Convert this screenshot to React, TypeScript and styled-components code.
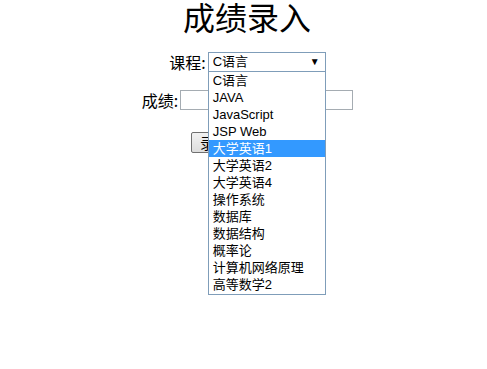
import React from "react";
import styled, { createGlobalStyle } from "styled-components";

const Global = createGlobalStyle`
  html, body { margin: 0; padding: 0; background: #fff; }
  body { font-family: "Liberation Sans", "Noto Sans CJK SC", sans-serif; color: #000; }
`;

const Page = styled.div`
  display: flex;
  flex-direction: column;
  align-items: center;
  padding-left: 7px;
  width: 487px;
  min-height: 369px;
  box-sizing: border-box;
`;

const Title = styled.h1`
  margin: 0;
  font-family: "Noto Sans CJK SC", serif;
  font-weight: 400;
  font-size: 32px;
  line-height: 32px;
  height: 34px;
`;

const Row = styled.div<{ $top: number }>`
  display: flex;
  align-items: center;
  justify-content: center;
  margin-top: ${(p) => p.$top}px;
  margin-left: 1px;
  height: 20px;
`;

const Label = styled.span`
  font-family: "Noto Sans CJK SC", sans-serif;
  font-size: 16px;
  line-height: 20px;
  padding-right: 2px;
`;

const SelectWrap = styled.div`
  position: relative;
  width: 118px;
  height: 20px;
`;

const SelectBox = styled.div`
  box-sizing: border-box;
  width: 118px;
  height: 20px;
  border: 1px solid #7f9db9;
  background: #fff;
  display: flex;
  align-items: center;
  justify-content: space-between;
  padding: 0 5px 0 4px;
  font-size: 13px;
  line-height: 18px;
`;

const Arrow = styled.span`
  font-size: 10px;
  line-height: 18px;
`;

const List = styled.ul`
  position: absolute;
  top: 19px;
  left: 0;
  margin: 0;
  padding: 0 0 1px;
  list-style: none;
  box-sizing: border-box;
  width: 118px;
  border: 1px solid #7f9db9;
  background: #fff;
  z-index: 2;
`;

const Item = styled.li<{ $active?: boolean }>`
  height: 17px;
  line-height: 17px;
  font-size: 13px;
  padding-left: 4px;
  white-space: nowrap;
  background: ${(p) => (p.$active ? "#3399ff" : "#fff")};
  color: ${(p) => (p.$active ? "#fff" : "#000")};
`;

const Input = styled.input`
  box-sizing: border-box;
  width: 173px;
  height: 20px;
  border: 1px solid #a5acb2;
  margin: 0;
  padding: 0 2px;
`;

const Buttons = styled.div`
  display: flex;
  gap: 16px;
  margin-top: 22px;
`;

const Button = styled.button`
  box-sizing: border-box;
  height: 21px;
  padding: 0 8px;
  font-family: "Noto Sans CJK SC", sans-serif;
  font-size: 15px;
  line-height: 19px;
  border: 1px solid #707070;
  border-radius: 2px;
  background: linear-gradient(#f2f2f2, #dddddd);
  color: #000;
`;

const courses = [
  "C语言",
  "JAVA",
  "JavaScript",
  "JSP Web",
  "大学英语1",
  "大学英语2",
  "大学英语4",
  "操作系统",
  "数据库",
  "数据结构",
  "概率论",
  "计算机网络原理",
  "高等数学2",
];

export default function App() {
  return (
    <>
      <Global />
      <Page>
        <Title>成绩录入</Title>
        <Row $top={18}>
          <Label>课程:</Label>
          <SelectWrap>
            <SelectBox>
              <span>C语言</span>
              <Arrow>▼</Arrow>
            </SelectBox>
            <List>
              {courses.map((c) => (
                <Item key={c} $active={c === "大学英语1"}>
                  {c}
                </Item>
              ))}
            </List>
          </SelectWrap>
        </Row>
        <Row $top={18}>
          <Label>成绩:</Label>
          <Input />
        </Row>
        <Buttons>
          <Button>录入</Button>
          <Button>重置</Button>
        </Buttons>
      </Page>
    </>
  );
}
